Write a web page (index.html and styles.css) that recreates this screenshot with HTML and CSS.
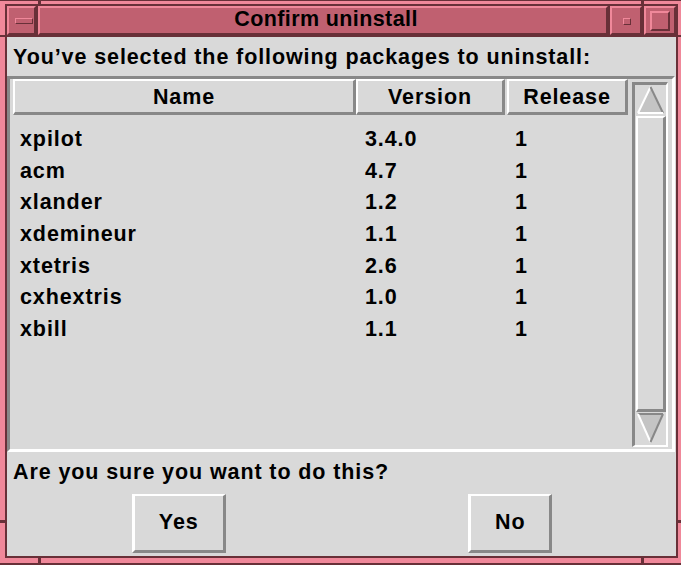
FILE: index.html
```
<!DOCTYPE html>
<html>
<head>
<meta charset="utf-8">
<title>Confirm uninstall</title>
<link rel="stylesheet" href="styles.css">
</head>
<body>
<div class="window">
  <div class="inner">
    <div class="titlebar">
      <div class="tb-btn tb-min"><span class="ico-min"></span></div>
      <div class="tb-title">Confirm uninstall</div>
      <div class="tb-btn tb-icon"><span class="ico-small"></span></div>
      <div class="tb-btn tb-max"><span class="ico-max"></span></div>
    </div>
    <div class="content">
      <div class="prompt">You’ve selected the following packages to uninstall:</div>
      <div class="list">
        <div class="table">
          <div class="thead">
            <div class="th th-name">Name</div>
            <div class="th th-ver">Version</div>
            <div class="th th-rel">Release</div>
          </div>
          <div class="tbody">
            <div class="tr"><span class="td c-name">xpilot</span><span class="td c-ver">3.4.0</span><span class="td c-rel">1</span></div>
            <div class="tr"><span class="td c-name">acm</span><span class="td c-ver">4.7</span><span class="td c-rel">1</span></div>
            <div class="tr"><span class="td c-name">xlander</span><span class="td c-ver">1.2</span><span class="td c-rel">1</span></div>
            <div class="tr"><span class="td c-name">xdemineur</span><span class="td c-ver">1.1</span><span class="td c-rel">1</span></div>
            <div class="tr"><span class="td c-name">xtetris</span><span class="td c-ver">2.6</span><span class="td c-rel">1</span></div>
            <div class="tr"><span class="td c-name">cxhextris</span><span class="td c-ver">1.0</span><span class="td c-rel">1</span></div>
            <div class="tr"><span class="td c-name">xbill</span><span class="td c-ver">1.1</span><span class="td c-rel">1</span></div>
          </div>
        </div>
        <div class="scrollbar">
          <div class="arrow arrow-up">
            <svg width="31" height="31" viewBox="0 0 31 31">
              <polygon points="15.5,2 3,28 28,28" fill="#c4c4c4"/>
              <line x1="3" y1="28" x2="15.5" y2="2" stroke="#ffffff" stroke-width="2"/>
              <line x1="15.5" y1="2" x2="28" y2="28" stroke="#888888" stroke-width="2"/>
              <line x1="3" y1="28" x2="28" y2="28" stroke="#ffffff" stroke-width="2"/>
            </svg>
          </div>
          <div class="slider"></div>
          <div class="arrow arrow-down">
            <svg width="31" height="33" viewBox="0 0 31 33">
              <polygon points="3,2 28,2 15.5,30" fill="#c4c4c4"/>
              <line x1="3" y1="2" x2="28" y2="2" stroke="#888888" stroke-width="2"/>
              <line x1="3" y1="2" x2="15.5" y2="30" stroke="#ffffff" stroke-width="2"/>
              <line x1="28" y1="2" x2="15.5" y2="30" stroke="#888888" stroke-width="2"/>
            </svg>
          </div>
        </div>
      </div>
      <div class="question">Are you sure you want to do this?</div>
      <div class="actions">
        <div class="cell"><button class="btn">Yes</button></div>
        <div class="cell"><button class="btn">No</button></div>
      </div>
    </div>
  </div>
  <span class="notch n-top-l"></span>
  <span class="notch n-top-r"></span>
  <span class="notch n-left-t"></span>
  <span class="notch n-right-t"></span>
  <span class="notch n-left-b"></span>
  <span class="notch n-right-b"></span>
  <span class="notch n-bot-l"></span>
  <span class="notch n-bot-r"></span>
</div>
</body>
</html>
```

FILE: styles.css
```
* { box-sizing: border-box; }
html, body { margin: 0; padding: 0; }
body {
  background: #d9d9d9;
  font-family: "Liberation Sans", Arial, sans-serif;
  font-weight: bold;
  font-size: 21.5px;
  letter-spacing: 0.9px;
  color: #000;
}
.window {
  position: relative;
  width: 681px;
  height: 565px;
  background: #f0889a;
  border-top: 1px solid #683038;
  border-bottom: 2px solid #683038;
  padding: 3px 3px 5px 5px;
}
.inner {
  height: 100%;
  border: 2px solid #683038;
  background: #683038;
  display: flex;
  flex-direction: column;
}
.titlebar {
  height: 31px;
  display: flex;
  gap: 2px;
  padding-bottom: 2px;
  background: #683038;
}
.tb-btn, .tb-title {
  height: 29px;
  background: #c06070;
  border-top: 2px solid #f0889a;
  border-left: 2px solid #f0889a;
  border-bottom: 2px solid #683038;
  border-right: 2px solid #683038;
  display: flex;
  align-items: center;
  justify-content: center;
}
.tb-min { width: 29px; }
.tb-icon, .tb-max { width: 32px; }
.tb-title {
  flex: 1;
  letter-spacing: 0.4px;
  padding-bottom: 2px;
  padding-left: 6px;
  white-space: nowrap;
}
.ico-min {
  width: 18px;
  height: 6px;
  margin-left: 5px;
  margin-top: 1px;
  border-top: 1px solid #f0889a;
  border-left: 1px solid #f0889a;
  border-bottom: 1px solid #683038;
  border-right: 1px solid #683038;
}
.ico-small {
  width: 8px;
  height: 7px;
  margin-left: 1px;
  margin-top: 1px;
  border-top: 1px solid #f0889a;
  border-left: 1px solid #f0889a;
  border-bottom: 1px solid #683038;
  border-right: 1px solid #683038;
}
.ico-max {
  width: 20px;
  height: 20px;
  border-top: 2px solid #f0889a;
  border-left: 2px solid #f0889a;
  border-bottom: 2px solid #683038;
  border-right: 2px solid #683038;
}
.content {
  flex: 1;
  background: #d9d9d9;
  display: flex;
  flex-direction: column;
}
.prompt {
  height: 39px;
  padding-left: 6px;
  padding-top: 2px;
  display: flex;
  align-items: center;
  white-space: nowrap;
}
.list {
  height: 376px;
  margin-right: 1px;
  border: 3px solid;
  border-color: #888 #fff #fff #888;
  display: flex;
}
.table {
  flex: 1;
  padding-left: 3px;
  display: flex;
  flex-direction: column;
}
.thead {
  display: flex;
  height: 36px;
}
.th {
  height: 36px;
  border-style: solid;
  border-width: 2px 3px 3px 2px;
  border-color: #fff #888 #888 #fff;
  display: flex;
  align-items: center;
  justify-content: center;
  padding-top: 2px;
}
.th-name { width: 343px; }
.th-ver { width: 149px; }
.th-rel { width: 121px; margin-left: 2px; }
.tbody { padding-top: 9px; }
.tr {
  display: flex;
  height: 31.67px;
  line-height: 31.67px;
}
.c-name { width: 343px; padding-left: 7px; }
.c-ver { width: 149px; padding-left: 9px; }
.c-rel { margin-left: 2px; padding-left: 8px; }
.scrollbar {
  width: 36px;
  margin: 3px 4px 2px 4px;
  border-style: solid;
  border-width: 3px 2px 2px 3px;
  border-color: #888 #fff #fff #888;
  display: flex;
  flex-direction: column;
}
.arrow { display: flex; }
.arrow-up { height: 31px; }
.arrow-down { height: 33px; }
.slider {
  flex: 1;
  margin: 0 0 0 1px;
  border-style: solid;
  border-width: 2px 3px 3px 2px;
  border-color: #fff #888 #888 #fff;
}
.question {
  height: 36px;
  padding-left: 6px;
  padding-top: 4px;
  display: flex;
  align-items: center;
  white-space: nowrap;
}
.actions {
  height: 68px;
  display: grid;
  grid-template-columns: 1fr 1fr;
  padding: 6px 0 3px 6px;
}
.cell { display: flex; justify-content: center; }
.btn {
  height: 59px;
  padding: 0 24px 2px 24px;
  font: inherit;
  letter-spacing: inherit;
  color: #000;
  background: #d9d9d9;
  border-style: solid;
  border-width: 2px 3px 3px 3px;
  border-color: #fff #888 #888 #fff;
  border-radius: 0;
}
.notch {
  position: absolute;
  background: #683038;
}
.n-top-l { left: 38px; top: -1px; width: 3px; height: 5px; }
.n-top-r { left: 641px; top: -1px; width: 3px; height: 5px; }
.n-left-t { left: 0; top: 34px; width: 5px; height: 2px; }
.n-right-t { left: 678px; top: 34px; width: 3px; height: 2px; }
.n-left-b { left: 0; top: 519px; width: 5px; height: 3px; }
.n-right-b { left: 678px; top: 519px; width: 3px; height: 3px; }
.n-bot-l { left: 38px; top: 557px; width: 3px; height: 7px; }
.n-bot-r { left: 641px; top: 557px; width: 3px; height: 7px; }
```
